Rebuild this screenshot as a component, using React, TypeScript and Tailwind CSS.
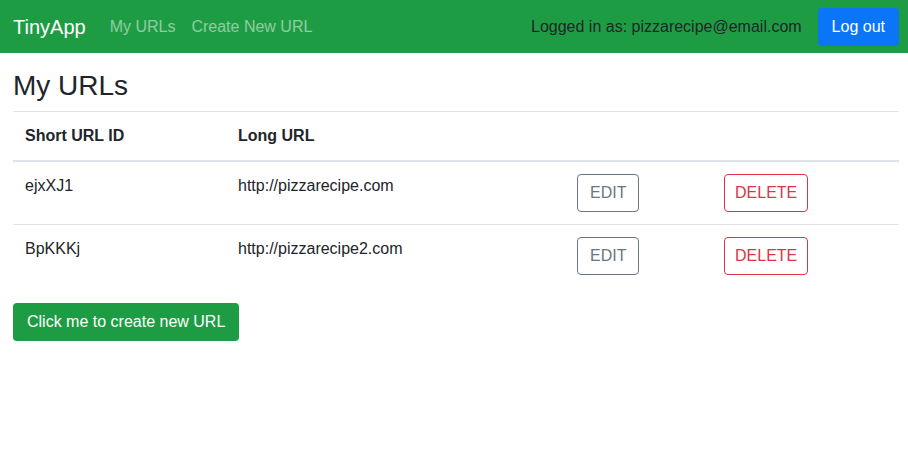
const urls = [
  { id: 'ejxXJ1', long: 'http://pizzarecipe.com' },
  { id: 'BpKKKj', long: 'http://pizzarecipe2.com' },
];

export default function App() {
  return (
    <div className="min-h-screen bg-white font-['Liberation_Sans',Arial,sans-serif] text-[16px] leading-6 text-[#212529]">
      <nav className="flex h-[53px] items-center bg-[#1e9c44] pl-[13px] pr-[9px]">
        <span className="mr-4 text-[20px] leading-[30px] text-white">TinyApp</span>
        <a className="px-2 text-white/50">My URLs</a>
        <a className="px-2 text-white/50">Create New URL</a>
        <div className="ml-auto flex items-center">
          <span className="mr-4 text-[#212529]">Logged in as: pizzarecipe@email.com</span>
          <button className="h-[38px] rounded-[4px] bg-[#0a75f7] px-[14px] text-white">Log out</button>
        </div>
      </nav>

      <main className="pl-[13px] pr-[9px]">
        <h3 className="mb-2 mt-4 text-[28px] font-medium leading-[1.2]">My URLs</h3>
        <table className="mb-4 w-full border-collapse text-left">
          <thead>
            <tr>
              <th className="w-[213px] border-t border-b-2 border-[#dee2e6] p-3 align-bottom font-bold">Short URL ID</th>
              <th className="w-[339px] border-t border-b-2 border-[#dee2e6] p-3 align-bottom font-bold">Long URL</th>
              <th className="w-[147px] border-t border-b-2 border-[#dee2e6] p-3"></th>
              <th className="border-t border-b-2 border-[#dee2e6] p-3"></th>
            </tr>
          </thead>
          <tbody>
            {urls.map((u, i) => (
              <tr key={u.id}>
                <td className={`${i > 0 ? 'border-t border-[#dee2e6]' : ''} p-3 align-top`}>{u.id}</td>
                <td className={`${i > 0 ? 'border-t border-[#dee2e6]' : ''} p-3 align-top`}>{u.long}</td>
                <td className={`${i > 0 ? 'border-t border-[#dee2e6]' : ''} p-3 align-top`}>
                  <button className="h-[38px] rounded-[4px] border border-[#6c757d] px-3 text-[#6c757d]">EDIT</button>
                </td>
                <td className={`${i > 0 ? 'border-t border-[#dee2e6]' : ''} p-3 align-top`}>
                  <button className="h-[38px] rounded-[4px] border border-[#dc3545] px-[10px] text-[#dc3545]">DELETE</button>
                </td>
              </tr>
            ))}
          </tbody>
        </table>
        <button className="h-[38px] rounded-[4px] bg-[#1e9c44] px-[14px] text-white">Click me to create new URL</button>
      </main>
    </div>
  );
}
